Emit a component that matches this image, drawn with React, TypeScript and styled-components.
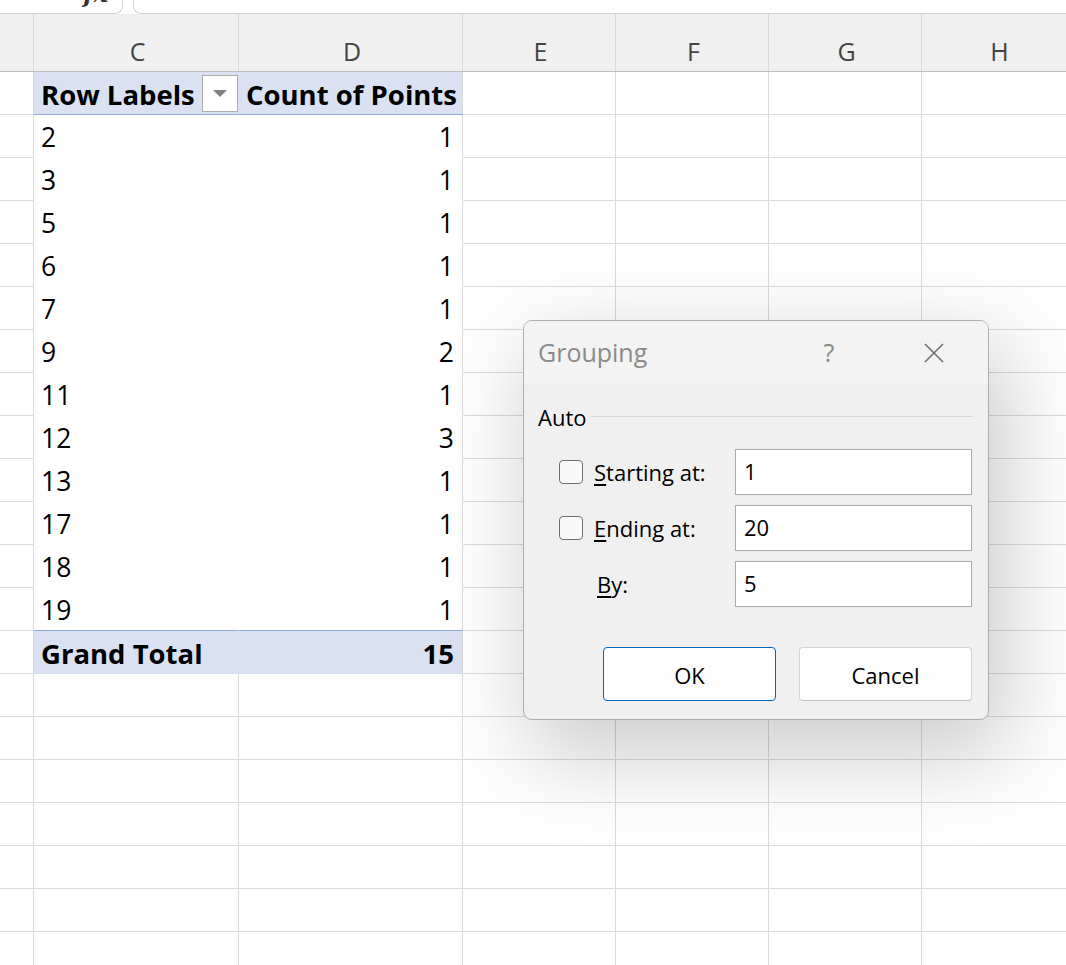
import React from "react";
import styled, { createGlobalStyle } from "styled-components";

const GlobalStyle = createGlobalStyle`
  html, body { margin: 0; padding: 0; background: #ffffff; }
  body { overflow: hidden; }
  * { box-sizing: border-box; }
`;

const COLS = "34px 205px 224px 153px 153px 153px 153px";
const GRID = "#dadada";
const PIVOT_BG = "#d9e1f2";
const PIVOT_LINE = "#8ea9db";

const Page = styled.div`
  position: relative;
  width: 1066px;
  height: 965px;
  overflow: hidden;
  background: #ffffff;
  display: flex;
  flex-direction: column;
`;

const FormulaStrip = styled.div`
  height: 14px;
  flex: none;
  display: flex;
  gap: 10px;
  background: #ffffff;
`;

const NameTail = styled.div`
  flex: none;
  width: 123px;
  height: 14px;
  border-right: 1px solid #d3d3d3;
  border-bottom: 1px solid #d3d3d3;
  border-bottom-right-radius: 8px;
  display: flex;
  align-items: flex-end;
  justify-content: flex-end;
  padding-right: 14px;
  overflow: hidden;
`;

const FxGlyph = styled.span`
  font-family: "DejaVu Serif", "Liberation Serif", serif;
  font-style: italic;
  font-weight: 700;
  font-size: 24px;
  line-height: 1;
  color: #333333;
  margin-bottom: 7px;
`;

const FormulaTail = styled.div`
  flex: 1;
  height: 14px;
  border-left: 1px solid #d3d3d3;
  border-bottom: 1px solid #d3d3d3;
  border-bottom-left-radius: 8px;
`;

const HeaderRow = styled.div`
  flex: none;
  display: grid;
  grid-template-columns: ${COLS};
  height: 58px;
  background: #f0f0f0;
  border-bottom: 1px solid #bcbcbc;
`;

const ColHead = styled.div`
  border-right: 1px solid #d9d9d9;
  display: flex;
  align-items: center;
  justify-content: center;
  padding: 18px 0 0 3px;
  font-family: "Open Sans", "Noto Sans", sans-serif;
  font-size: 25px;
  line-height: 1;
  color: #444444;
`;

const SheetRow = styled.div`
  flex: none;
  display: grid;
  grid-template-columns: ${COLS};
`;

type Kind = "plain" | "head" | "data" | "lastData" | "total";

const bottomLine = (k: Kind) => {
  switch (k) {
    case "head":
    case "lastData":
      return PIVOT_LINE;
    case "data":
      return "transparent";
    case "total":
      return PIVOT_BG;
    default:
      return GRID;
  }
};

const isBold = (k?: Kind) => k === "head" || k === "total";

const Cell = styled.div<{ $kind?: Kind; $inner?: boolean; $right?: boolean }>`
  height: 43px;
  border-right: 1px solid ${(p) => (p.$inner ? "transparent" : GRID)};
  border-bottom: 1px solid ${(p) => bottomLine(p.$kind ?? "plain")};
  background: ${(p) => (isBold(p.$kind) ? PIVOT_BG : "#ffffff")};
  display: flex;
  align-items: center;
  justify-content: ${(p) => (p.$right ? "flex-end" : "space-between")};
  padding: 3px ${(p) => (p.$right ? "8px" : "0")} 0 7px;
  font-family: "Open Sans", "Noto Sans", sans-serif;
  font-size: ${(p) => (isBold(p.$kind) ? "27.5px" : "26.5px")};
  line-height: 1;
  font-weight: ${(p) => (isBold(p.$kind) ? 700 : 400)};
  color: #000000;
  white-space: nowrap;
  overflow: hidden;
`;

const FilterButton = styled.div`
  align-self: flex-start;
  width: 36px;
  height: 37px;
  background: #ffffff;
  border: 1px solid #ababab;
  display: flex;
  align-items: center;
  justify-content: center;
`;

/* ---------- dialog ---------- */

const Dialog = styled.div`
  position: absolute;
  left: 523px;
  top: 320px;
  width: 466px;
  height: 400px;
  border: 1px solid #adadad;
  border-radius: 9px;
  background: #f0f0f0;
  box-shadow: 12px 30px 90px 8px rgba(0, 0, 0, 0.2);
  overflow: hidden;
  display: flex;
  flex-direction: column;
  font-family: "Open Sans", "Noto Sans", sans-serif;
`;

const TitleBar = styled.div`
  flex: none;
  height: 63px;
  background: #f3f3f3;
  display: flex;
  align-items: center;
  padding-left: 14px;
`;

const Title = styled.div`
  flex: 1;
  font-size: 25px;
  color: #8a8a8a;
  line-height: 1;
`;

const HelpGlyph = styled.div`
  width: 50px;
  margin-right: 25px;
  text-align: center;
  font-size: 25px;
  line-height: 1;
  color: #8a8a8a;
`;

const CloseButton = styled.div`
  width: 109px;
  height: 63px;
  display: flex;
  align-items: center;
  justify-content: center;
`;

const DialogBody = styled.div`
  flex: 1;
  display: flex;
  flex-direction: column;
  padding: 0 15px 0 14px;
`;

const GroupHeader = styled.div`
  margin-top: 18px;
  height: 30px;
  display: flex;
  align-items: center;
  gap: 5px;
`;

const GroupLabel = styled.div`
  font-size: 22px;
  line-height: 1;
  color: #000000;
`;

const GroupRule = styled.div`
  flex: 1;
  height: 1px;
  background: #d6d6d6;
  margin-top: -1px;
`;

const FieldGrid = styled.div`
  margin-top: 17px;
  display: grid;
  grid-template-columns: 24px 130px 237px;
  grid-auto-rows: 46px;
  column-gap: 11px;
  row-gap: 10px;
  padding-left: 21px;
  align-items: center;
`;

const CheckBox = styled.div`
  width: 24px;
  height: 24px;
  border: 1.5px solid #707070;
  border-radius: 4px;
  background: #f9f9f9;
`;

const Spacer = styled.div``;

const FieldLabel = styled.div<{ $indent?: boolean }>`
  font-size: 22px;
  line-height: 1;
  color: #000000;
  padding-left: ${(p) => (p.$indent ? "3px" : "0")};
  white-space: nowrap;
  u {
    text-decoration-thickness: 1.5px;
    text-underline-offset: 3px;
  }
`;

const Field = styled.div`
  height: 46px;
  border: 1px solid #a9a9a9;
  background: #ffffff;
  display: flex;
  align-items: center;
  padding: 0 0 2px 8px;
  font-size: 22px;
  line-height: 1;
  color: #000000;
`;

const ButtonRow = styled.div`
  margin-top: 40px;
  display: flex;
  justify-content: flex-end;
  gap: 23px;
  padding-right: 1px;
`;

const DialogButton = styled.div<{ $primary?: boolean }>`
  width: 173px;
  height: 54px;
  border-radius: 4px;
  background: #fdfdfd;
  border: 1px solid ${(p) => (p.$primary ? "#0067c0" : "#d3d3d3")};
  border-bottom-color: ${(p) => (p.$primary ? "#0067c0" : "#bdbdbd")};
  display: flex;
  align-items: center;
  justify-content: center;
  padding-top: 2px;
  font-size: 22px;
  line-height: 1;
  color: #000000;
`;

const data: [number, number][] = [
  [2, 1],
  [3, 1],
  [5, 1],
  [6, 1],
  [7, 1],
  [9, 2],
  [11, 1],
  [12, 3],
  [13, 1],
  [17, 1],
  [18, 1],
  [19, 1],
];

const EmptyCells = () => (
  <>
    <Cell />
    <Cell />
    <Cell />
    <Cell />
  </>
);

export default function App() {
  return (
    <>
      <GlobalStyle />
      <Page>
        <FormulaStrip>
          <NameTail>
            <FxGlyph>fx</FxGlyph>
          </NameTail>
          <FormulaTail />
        </FormulaStrip>

        <HeaderRow>
          {["", "C", "D", "E", "F", "G", "H"].map((c, i) => (
            <ColHead key={i}>{c}</ColHead>
          ))}
        </HeaderRow>

        <SheetRow>
          <Cell />
          <Cell $kind="head" $inner>
            <span>Row Labels</span>
            <FilterButton>
              <svg width="14" height="7" viewBox="0 0 14 7">
                <path d="M0 0H14L7 7Z" fill="#808080" />
              </svg>
            </FilterButton>
          </Cell>
          <Cell $kind="head">Count of Points</Cell>
          <EmptyCells />
        </SheetRow>

        {data.map(([label, count], i) => {
          const kind: Kind = i === data.length - 1 ? "lastData" : "data";
          return (
            <SheetRow key={label}>
              <Cell />
              <Cell $kind={kind} $inner>
                {label}
              </Cell>
              <Cell $kind={kind} $right>
                {count}
              </Cell>
              <EmptyCells />
            </SheetRow>
          );
        })}

        <SheetRow>
          <Cell />
          <Cell $kind="total" $inner>
            Grand Total
          </Cell>
          <Cell $kind="total" $right>
            15
          </Cell>
          <EmptyCells />
        </SheetRow>

        {Array.from({ length: 7 }).map((_, i) => (
          <SheetRow key={`e${i}`}>
            <Cell />
            <Cell />
            <Cell />
            <EmptyCells />
          </SheetRow>
        ))}

        <Dialog>
          <TitleBar>
            <Title>Grouping</Title>
            <HelpGlyph>?</HelpGlyph>
            <CloseButton>
              <svg width="20" height="20" viewBox="0 0 20 20">
                <path d="M1 1L19 19M19 1L1 19" stroke="#6f6f6f" strokeWidth="1.6" fill="none" />
              </svg>
            </CloseButton>
          </TitleBar>
          <DialogBody>
            <GroupHeader>
              <GroupLabel>Auto</GroupLabel>
              <GroupRule />
            </GroupHeader>
            <FieldGrid>
              <CheckBox />
              <FieldLabel>
                <u>S</u>tarting at:
              </FieldLabel>
              <Field>1</Field>
              <CheckBox />
              <FieldLabel>
                <u>E</u>nding at:
              </FieldLabel>
              <Field>20</Field>
              <Spacer />
              <FieldLabel $indent>
                <u>B</u>y:
              </FieldLabel>
              <Field>5</Field>
            </FieldGrid>
            <ButtonRow>
              <DialogButton $primary>OK</DialogButton>
              <DialogButton>Cancel</DialogButton>
            </ButtonRow>
          </DialogBody>
        </Dialog>
      </Page>
    </>
  );
}
